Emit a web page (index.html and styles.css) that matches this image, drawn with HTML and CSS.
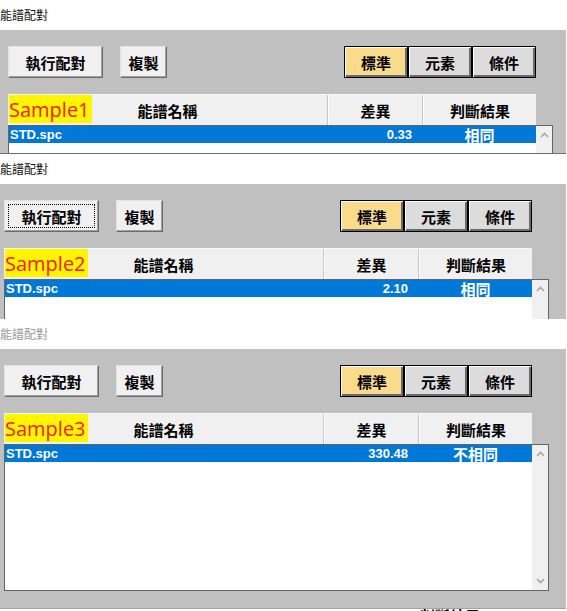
FILE: index.html
```html
<!DOCTYPE html>
<html lang="zh-Hant">
<head>
<meta charset="utf-8">
<title>能譜配對</title>
<link rel="stylesheet" href="styles.css">
</head>
<body>
<div class="desk">

  <section class="win win1">
    <div class="titlebar"><span class="title">能譜配對</span></div>
    <div class="body">
      <div class="toolbar">
        <div class="actions">
          <button class="btn btn-run">執行配對</button>
          <button class="btn btn-copy">複製</button>
        </div>
        <div class="toggles">
          <span class="tg active">標準</span><span class="tg">元素</span><span class="tg">條件</span>
        </div>
      </div>
      <div class="header">
        <div class="hcell c-name">能譜名稱</div>
        <div class="hcell c-diff">差異</div>
        <div class="hcell c-res">判斷結果</div>
        <span class="sample">Sample1</span>
      </div>
      <div class="listbox">
        <div class="rows">
          <div class="row sel"><span class="c-name">STD.spc</span><span class="c-diff">0.33</span><span class="c-res">相同</span></div>
        </div>
        <div class="vscroll">
          <svg class="arrow" width="9" height="6" viewBox="0 0 9 6"><polyline points="1,5 4.5,1.5 8,5" fill="none" stroke="#a6a6a6" stroke-width="1.6"/></svg>
          <svg class="arrow" width="9" height="6" viewBox="0 0 9 6"><polyline points="1,1 4.5,4.5 8,1" fill="none" stroke="#a6a6a6" stroke-width="1.6"/></svg>
        </div>
      </div>
    </div>
  </section>

  <section class="win win2">
    <div class="titlebar"><span class="title">能譜配對</span></div>
    <div class="body">
      <div class="toolbar">
        <div class="actions">
          <button class="btn btn-run focus"><span class="focus-ring">執行配對</span></button>
          <button class="btn btn-copy">複製</button>
        </div>
        <div class="toggles">
          <span class="tg active">標準</span><span class="tg">元素</span><span class="tg">條件</span>
        </div>
      </div>
      <div class="header">
        <div class="hcell c-name">能譜名稱</div>
        <div class="hcell c-diff">差異</div>
        <div class="hcell c-res">判斷結果</div>
        <span class="sample">Sample2</span>
      </div>
      <div class="listbox">
        <div class="rows">
          <div class="row sel"><span class="c-name">STD.spc</span><span class="c-diff">2.10</span><span class="c-res">相同</span></div>
        </div>
        <div class="vscroll">
          <svg class="arrow" width="9" height="6" viewBox="0 0 9 6"><polyline points="1,5 4.5,1.5 8,5" fill="none" stroke="#a6a6a6" stroke-width="1.6"/></svg>
          <svg class="arrow" width="9" height="6" viewBox="0 0 9 6"><polyline points="1,1 4.5,4.5 8,1" fill="none" stroke="#a6a6a6" stroke-width="1.6"/></svg>
        </div>
      </div>
    </div>
  </section>

  <section class="win win3">
    <div class="titlebar inactive"><span class="title">能譜配對</span></div>
    <div class="body">
      <div class="toolbar">
        <div class="actions">
          <button class="btn btn-run">執行配對</button>
          <button class="btn btn-copy">複製</button>
        </div>
        <div class="toggles">
          <span class="tg active">標準</span><span class="tg">元素</span><span class="tg">條件</span>
        </div>
      </div>
      <div class="header">
        <div class="hcell c-name">能譜名稱</div>
        <div class="hcell c-diff">差異</div>
        <div class="hcell c-res">判斷結果</div>
        <span class="sample">Sample3</span>
      </div>
      <div class="listbox">
        <div class="rows">
          <div class="row sel"><span class="c-name">STD.spc</span><span class="c-diff">330.48</span><span class="c-res">不相同</span></div>
        </div>
        <div class="vscroll">
          <svg class="arrow" width="9" height="6" viewBox="0 0 9 6"><polyline points="1,5 4.5,1.5 8,5" fill="none" stroke="#a6a6a6" stroke-width="1.6"/></svg>
          <svg class="arrow" width="9" height="6" viewBox="0 0 9 6"><polyline points="1,1 4.5,4.5 8,1" fill="none" stroke="#a6a6a6" stroke-width="1.6"/></svg>
        </div>
      </div>
    </div>
  </section>

  <div class="tail"><span class="tail-text">判斷結果</span></div>
</div>
</body>
</html>
```

FILE: styles.css
```css
* { box-sizing: border-box; }

html, body {
  margin: 0;
  padding: 0;
  background: #ffffff;
}

body {
  width: 567px;
  height: 611px;
  overflow: hidden;
  font-family: "Noto Sans CJK TC", "Noto Sans", sans-serif;
}

.desk {
  width: 567px;
}

/* ---------- window ---------- */
.win {
  width: 566px;
  overflow: hidden;
  background: #ffffff;
}

.win1 { height: 153px; }
.win2 { height: 166px; border-top: 1px solid #6e6e6e; }
.win3 { height: 290px; }

.titlebar {
  height: 30px;
  background: #ffffff;
  display: flex;
  align-items: center;
  padding-left: 0;
}

.title {
  font-family: "Noto Sans CJK TC", sans-serif;
  font-size: 12px;
  line-height: 14px;
  color: #111111;
  margin-left: 0;
}

.titlebar.inactive .title { color: #9a9a9a; }

.body {
  background: #c0c0c0;
  padding: 16px 0 0 8px;
  height: 100%;
}

.win2 .body,
.win3 .body { padding-left: 4px; }

.win3 .body {
  height: 260px;
  padding-bottom: 17px;
  border-bottom: 1px solid #a3a3a3;
}

/* ---------- toolbar ---------- */
.toolbar {
  width: 528px;
  height: 32px;
  display: flex;
  justify-content: space-between;
  margin-bottom: 16px;
}

.actions {
  display: flex;
  gap: 17px;
}

.btn {
  height: 32px;
  margin: 0;
  padding: 0;
  background: #f0f0f0;
  border: 1px solid;
  border-color: #e2e2e2 #6a6a6a #6a6a6a #e2e2e2;
  box-shadow: inset -1px -1px 0 #a0a0a0;
  font-family: "Noto Sans CJK TC", sans-serif;
  font-weight: 700;
  font-size: 15px;
  color: #000000;
  display: flex;
  align-items: center;
  justify-content: center;
}

.btn-run { width: 95px; }
.btn-copy { width: 47px; }

.btn.focus {
  padding: 3px;
}

.focus-ring {
  width: 100%;
  height: 100%;
  border: 1px dotted #000000;
  display: flex;
  align-items: center;
  justify-content: center;
}

.toggles {
  display: flex;
}

.tg {
  width: 64px;
  height: 32px;
  border: 1px solid #000000;
  background: #dcdcdc;
  box-shadow: inset 1px 1px 0 #ffffff, inset -2px -2px 0 #6a6a6a;
  font-weight: 700;
  font-size: 15px;
  color: #000000;
  display: flex;
  align-items: center;
  justify-content: center;
}

.tg.active { background: #fadb8c; }

/* ---------- header ---------- */
.header {
  position: relative;
  width: 528px;
  height: 31px;
  display: flex;
  background: #f0f0f0;
  border-top: 1px solid #f8f8f8;
}

.hcell {
  display: flex;
  align-items: center;
  justify-content: center;
  font-weight: 700;
  font-size: 15px;
  color: #000000;
  border-right: 1px solid #c6c6c6;
}

.header .c-name { width: 320px; }
.header .c-diff { width: 95px; border-left: 1px solid #ffffff; }
.header .c-res { flex: 1; border-right: none; border-left: 1px solid #ffffff; }

.sample {
  position: absolute;
  left: 1px;
  top: 0;
  width: 83px;
  height: 28px;
  background: #fff500;
  color: #f2221c;
  font-family: "Open Sans", "Noto Sans", sans-serif;
  font-size: 20px;
  line-height: 29px;
  padding-left: 0;
  white-space: nowrap;
}

/* ---------- list ---------- */
.listbox {
  width: 545px;
  height: 147px;
  display: flex;
  background: #ffffff;
  border: 1px solid #646464;
}

.rows {
  flex: 1;
}

.row {
  height: 17px;
  display: flex;
  align-items: center;
  color: #ffffff;
}

.row.sel { background: #0078d7; }

.row .c-name {
  width: 319px;
  padding-left: 1px;
  font-family: "Liberation Sans", sans-serif;
  font-weight: 700;
  font-size: 13px;
}

.row .c-diff {
  width: 95px;
  text-align: right;
  padding-right: 11px;
  font-family: "Liberation Sans", sans-serif;
  font-weight: 700;
  font-size: 13px;
}

.row .c-res {
  flex: 1;
  text-align: center;
  font-family: "Noto Sans CJK TC", sans-serif;
  font-weight: 700;
  font-size: 15px;
  line-height: 17px;
}

.vscroll {
  width: 16px;
  background: #f0f0f0;
  display: flex;
  flex-direction: column;
  justify-content: space-between;
  align-items: center;
  padding: 6px 0 6px;
}

.arrow { display: block; }

/* ---------- strip under last window ---------- */
.tail {
  height: 2px;
  overflow: hidden;
  padding-left: 420px;
  position: relative;
}

.tail-text {
  display: block;
  font-weight: 700;
  font-size: 15px;
  line-height: 15px;
  margin-top: -1px;
  color: #000000;
}
```
